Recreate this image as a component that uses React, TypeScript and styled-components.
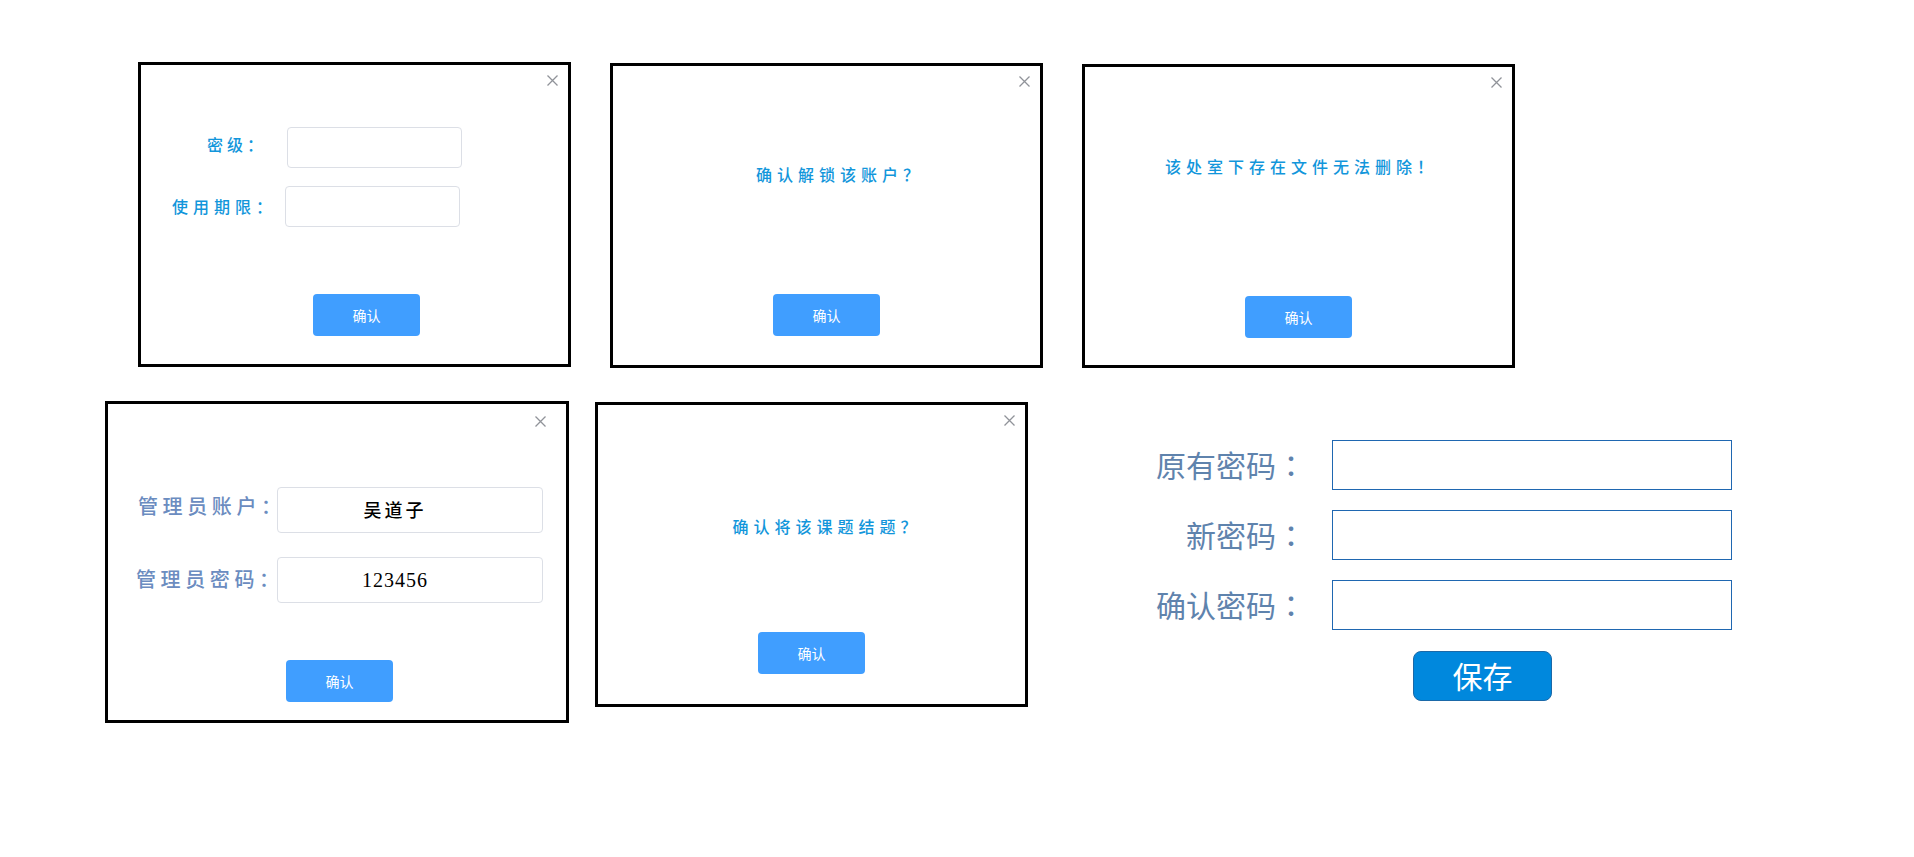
import React from 'react';
import styled, {createGlobalStyle} from 'styled-components';

const GlobalStyle = createGlobalStyle`
  * { box-sizing: border-box; }
  body {
    margin: 0;
    background: #fff;
    font-family: "Noto Sans CJK SC", "Noto Sans", sans-serif;
  }
`;

const Page = styled.div`
  padding-top: 62px;
  display: flex;
  flex-direction: column;
`;

const TopRow = styled.div`
  display: flex;
  align-items: flex-start;
  gap: 39px;
  padding-left: 138px;
`;

const BottomRow = styled.div`
  display: flex;
  align-items: flex-start;
  margin-top: 33px;
  padding-left: 105px;
`;

const Dialog = styled.div<{$w: number; $h: number; $top?: number; $ml?: number}>`
  position: relative;
  flex: none;
  width: ${p => p.$w}px;
  height: ${p => p.$h}px;
  margin-top: ${p => p.$top || 0}px;
  margin-left: ${p => p.$ml || 0}px;
  border: 3px solid #000;
  background: #fff;
  display: flex;
  flex-direction: column;
`;

const Close = styled.button<{$top: number; $right: number}>`
  position: absolute;
  top: ${p => p.$top}px;
  right: ${p => p.$right}px;
  width: 11px;
  height: 11px;
  padding: 0;
  border: none;
  background: none;
  display: flex;
  svg { display: block; }
`;

const Form = styled.div<{$pt: number; $gap: number}>`
  padding-top: ${p => p.$pt}px;
  display: flex;
  flex-direction: column;
  gap: ${p => p.$gap}px;
`;

const Row = styled.div<{$pl: number}>`
  display: flex;
  align-items: center;
  padding-left: ${p => p.$pl}px;
`;

const Label = styled.span<{$w: number; $size: number; $spacing: number; $color: string; $lift?: number}>`
  flex: none;
  width: ${p => p.$w}px;
  margin-bottom: ${p => (p.$lift || 0) * 2}px;
  font-size: ${p => p.$size}px;
  font-weight: 500;
  letter-spacing: ${p => p.$spacing}px;
  color: ${p => p.$color};
  white-space: nowrap;
`;

const Field = styled.div<{$w: number; $h: number}>`
  flex: none;
  width: ${p => p.$w}px;
  height: ${p => p.$h}px;
  border: 1px solid #dcdfe6;
  border-radius: 4px;
  background: #fff;
  display: flex;
  align-items: center;
  justify-content: center;
  padding-right: 30px;
  color: #000;
`;

const NameValue = styled.span`
  font-size: 18px;
  font-weight: 500;
  letter-spacing: 3px;
  margin-bottom: 3px;
`;

const CodeValue = styled.span`
  font-family: "Liberation Serif", serif;
  font-size: 20px;
  letter-spacing: 1px;
`;

const Message = styled.p<{$pt: number; $shift: number}>`
  margin: 0;
  padding-top: ${p => p.$pt}px;
  padding-left: ${p => Math.max(p.$shift, 0)}px;
  padding-right: ${p => Math.max(-p.$shift, 0)}px;
  text-align: center;
  font-size: 16px;
  font-weight: 500;
  line-height: 22px;
  letter-spacing: 5px;
  color: #1296db;
`;

const Footer = styled.div<{$pb: number; $shift?: number}>`
  margin-top: auto;
  display: flex;
  justify-content: center;
  padding-bottom: ${p => p.$pb}px;
  padding-left: ${p => p.$shift || 0}px;
`;

const ConfirmButton = styled.button`
  width: 107px;
  height: 42px;
  border: none;
  border-radius: 4px;
  background: #409eff;
  color: #fff;
  font-family: "Noto Sans CJK SC", sans-serif;
  font-size: 14px;
`;

const PasswordForm = styled.div`
  margin-top: 39px;
  margin-left: 108px;
  display: grid;
  grid-template-columns: 170px 400px;
  column-gap: 26px;
  row-gap: 20px;
  align-items: center;
`;

const FormLabel = styled.span`
  text-align: right;
  font-size: 30px;
  color: #5f83ad;
  white-space: nowrap;
  margin-bottom: 2px;
`;

const Colon = styled.span`
  font-family: "Noto Sans CJK TC", sans-serif;
`;

const FormInput = styled.div`
  height: 50px;
  border: 1px solid #1f67b1;
  background: #fff;
`;

const SaveButton = styled.button`
  grid-column: 2;
  justify-self: start;
  margin-left: 81px;
  margin-top: 1px;
  width: 139px;
  height: 50px;
  border: 1px solid #1b69a8;
  border-radius: 8px;
  background: #0088dd;
  color: #fff;
  font-family: "Noto Sans CJK SC", sans-serif;
  font-size: 30px;
  line-height: 1;
  padding: 0 0 2px;
`;

const CloseIcon: React.FC<{top?: number; right?: number}> = ({top = 10, right = 10}) => (
    <Close $top={top} $right={right} aria-label="close">
        <svg width="11" height="11" viewBox="0 0 11 11">
            <path d="M0.5 0.5 L10.5 10.5 M10.5 0.5 L0.5 10.5" stroke="#909399" strokeWidth="1.3"/>
        </svg>
    </Close>
);

const blue = '#1296db';
const slate = '#6b8cc0';

const App: React.FC = () => {
    return (
        <Page>
            <GlobalStyle/>
            <TopRow>
                <Dialog $w={433} $h={305}>
                    <CloseIcon/>
                    <Form $pt={62} $gap={18}>
                        <Row $pl={66}>
                            <Label $w={80} $size={16} $spacing={4} $color={blue} $lift={4}>密级：</Label>
                            <Field $w={175} $h={41}/>
                        </Row>
                        <Row $pl={31}>
                            <Label $w={113} $size={16} $spacing={5} $color={blue} $lift={1}>使用期限：</Label>
                            <Field $w={175} $h={41}/>
                        </Row>
                    </Form>
                    <Footer $pb={28} $shift={24}>
                        <ConfirmButton>确认</ConfirmButton>
                    </Footer>
                </Dialog>
                <Dialog $w={433} $h={305} $top={1}>
                    <CloseIcon/>
                    <Message $pt={97} $shift={27}>确认解锁该账户？</Message>
                    <Footer $pb={29}>
                        <ConfirmButton>确认</ConfirmButton>
                    </Footer>
                </Dialog>
                <Dialog $w={433} $h={304} $top={2}>
                    <CloseIcon/>
                    <Message $pt={88} $shift={6}>该处室下存在文件无法删除！</Message>
                    <Footer $pb={27}>
                        <ConfirmButton>确认</ConfirmButton>
                    </Footer>
                </Dialog>
            </TopRow>
            <BottomRow>
                <Dialog $w={464} $h={322}>
                    <CloseIcon top={12} right={20}/>
                    <Form $pt={83} $gap={24}>
                        <Row $pl={30}>
                            <Label $w={139} $size={20} $spacing={4.6} $color={slate} $lift={5}>管理员账户：</Label>
                            <Field $w={266} $h={46}>
                                <NameValue>吴道子</NameValue>
                            </Field>
                        </Row>
                        <Row $pl={28}>
                            <Label $w={141} $size={20} $spacing={4.6} $color={slate} $lift={2}>管理员密码：</Label>
                            <Field $w={266} $h={46}>
                                <CodeValue>123456</CodeValue>
                            </Field>
                        </Row>
                    </Form>
                    <Footer $pb={18} $shift={5}>
                        <ConfirmButton>确认</ConfirmButton>
                    </Footer>
                </Dialog>
                <Dialog $w={433} $h={305} $top={1} $ml={26}>
                    <CloseIcon/>
                    <Message $pt={110} $shift={31}>确认将该课题结题？</Message>
                    <Footer $pb={30}>
                        <ConfirmButton>确认</ConfirmButton>
                    </Footer>
                </Dialog>
                <PasswordForm>
                    <FormLabel>原有密码<Colon>：</Colon></FormLabel>
                    <FormInput/>
                    <FormLabel>新密码<Colon>：</Colon></FormLabel>
                    <FormInput/>
                    <FormLabel>确认密码<Colon>：</Colon></FormLabel>
                    <FormInput/>
                    <SaveButton>保存</SaveButton>
                </PasswordForm>
            </BottomRow>
        </Page>
    );
};

export default App;
